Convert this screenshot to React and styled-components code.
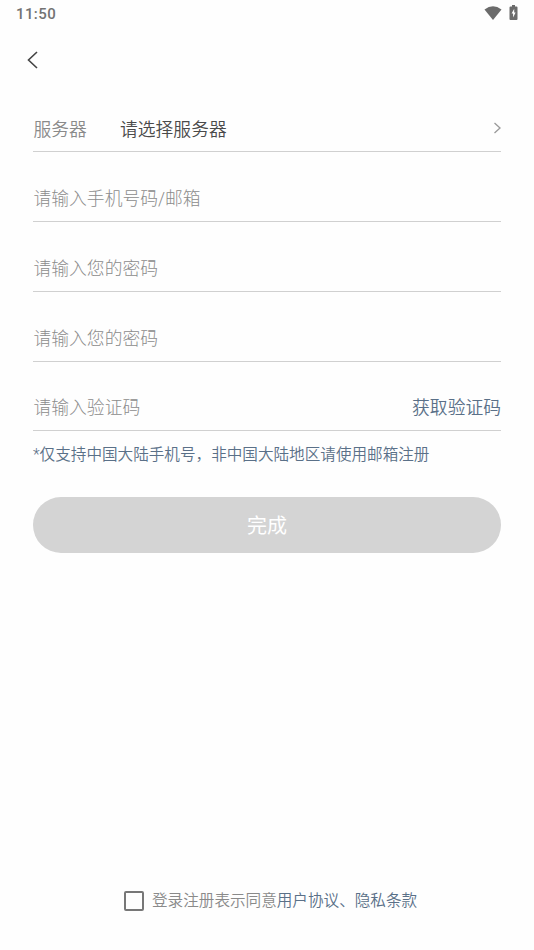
import React from "react";
import styled, { createGlobalStyle } from "styled-components";

const Global = createGlobalStyle`
  * { box-sizing: border-box; }
  body { margin: 0; background: #fefefe; font-family: Roboto, "Noto Sans CJK SC", sans-serif; }
`;
const Screen = styled.main`
  width: 534px; height: 950px; display: flex; flex-direction: column; background: #fefefe;
`;
const StatusBar = styled.header`
  height: 28px; padding: 0 16px 0 16px; display: flex; align-items: center; justify-content: space-between;
  font-size: 15px; font-weight: 500; letter-spacing: 0.4px; color: #737373;
`;
const StatusIcons = styled.div`
  display: flex; align-items: center; gap: 7px; height: 16px; margin-bottom: 3px;
`;
const NavBar = styled.nav`
  height: 64px; padding-left: 26px; display: flex; align-items: center;
`;
const IconButton = styled.button`
  border: 0; padding: 0; background: none; display: flex;
`;
const Form = styled.form`
  margin: -10px 33px 0; display: flex; flex-direction: column;
`;
const Field = styled.div`
  height: ${(p) => (p.$last ? 69 : 70)}px; padding-top: ${(p) => (p.$first ? 23 : 20)}px;
  display: flex; align-items: center; border-bottom: 1px solid #d0d0d0;
  font-size: 17.8px; font-weight: 350; color: #8f8f8f;
`;
const FieldLabel = styled.span`
  width: 87px; padding-left: 0.5px; color: #8a8a8a;
`;
const FieldValue = styled.span`
  flex: 1; color: #4a4a4a;
`;
const Placeholder = styled.span`
  flex: 1; font-weight: 300; color: #8c8c8c; padding-left: 0.5px;
`;
const CodeLink = styled.span`
  color: #5a7088;
`;
const Hint = styled.p`
  margin: 13px 0 0; font-size: 15.6px; font-weight: 350; line-height: 23px; color: #5a7088; white-space: nowrap;
`;
const Submit = styled.button`
  margin-top: 30px; padding: 0 0 2px; height: 56px; border: 0; border-radius: 28px; background: #d4d4d4; color: #fff;
  font: 400 20px Roboto, "Noto Sans CJK SC", sans-serif;
`;
const Agreement = styled.footer`
  margin: auto 0 37px 124px; display: flex; align-items: center; gap: 8px;
  font-size: 15.6px; font-weight: 350; line-height: 23px; color: #8a8a8a;
`;
const AgreementText = styled.span`
  padding-top: 2px;
`;
const Checkbox = styled.span`
  width: 20px; height: 20px; border: 2px solid #777; border-radius: 2px;
`;
const Policy = styled.span`
  color: #5a7088;
`;

export default function App() {
  return (
    <Screen>
      <Global />
      <StatusBar>
        <span>11:50</span>
        <StatusIcons>
          <svg width="18" height="14" viewBox="0 0 18 14"><path d="M0.500 3.500Q9-3 17.500 3.500L9 14Z" fill="#6b6b6b" /></svg>
          <svg width="9" height="15" viewBox="0 0 9 15"><path d="M3 0h3v1.500h1.500q1 0 1 1V14q0 1-1 1H1.500q-1 0-1-1V2.500q0-1 1-1H3z" fill="#6b6b6b" /><path d="M5.200 3.800 2.600 8.500h1.500v4l2.500-5H5.200z" fill="#fff" /></svg>
        </StatusIcons>
      </StatusBar>
      <NavBar>
        <IconButton type="button" aria-label="返回">
          <svg width="12" height="18" viewBox="0 0 12 18" fill="none" stroke="#444" strokeWidth="1.600"><path d="M11 1 2.500 9 11 17" /></svg>
        </IconButton>
      </NavBar>
      <Form>
        <Field $first>
          <FieldLabel>服务器</FieldLabel>
          <FieldValue>请选择服务器</FieldValue>
          <svg width="8" height="12" viewBox="0 0 8 12" fill="none" stroke="#999" strokeWidth="1.300"><path d="m1.500 1 5.500 5-5.500 5" /></svg>
        </Field>
        <Field><Placeholder>请输入手机号码/邮箱</Placeholder></Field>
        <Field><Placeholder>请输入您的密码</Placeholder></Field>
        <Field><Placeholder>请输入您的密码</Placeholder></Field>
        <Field $last><Placeholder>请输入验证码</Placeholder><CodeLink>获取验证码</CodeLink></Field>
        <Hint>*仅支持中国大陆手机号，非中国大陆地区请使用邮箱注册</Hint>
        <Submit type="button">完成</Submit>
      </Form>
      <Agreement>
        <Checkbox role="checkbox" aria-checked="false" />
        <AgreementText>登录注册表示同意<Policy>用户协议、隐私条款</Policy></AgreementText>
      </Agreement>
    </Screen>
  );
}
